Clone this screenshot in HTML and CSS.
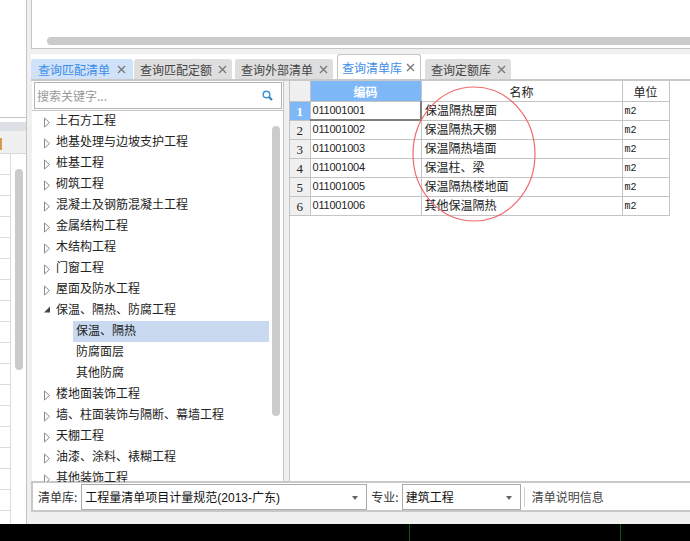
FILE: index.html
```html
<!DOCTYPE html>
<html lang="zh-CN">
<head>
    <meta charset="UTF-8">
    <title>查询清单库</title>
    <link rel="stylesheet" href="styles.css">
</head>
<body>
    <svg class="defs" width="0" height="0">
        <symbol id="closed" viewBox="0 0 6 11"><path d="M.5 1 5.5 5.500.5 10Z" fill="#fff" stroke="#8a8a8a"/></symbol>
        <symbol id="open" viewBox="0 0 6 11"><path d="M0 6.500 6 6.500 6 .5Z" fill="#444"/></symbol>
        <symbol id="close" viewBox="0 0 9 9"><path d="M1 1 8 8M8 1 1 8" fill="none" stroke="#777" stroke-width="1.300"/></symbol>
    </svg>

    <div class="desk">
        <div class="side">
            <div class="side-top"></div>
            <div class="side-band"></div>
            <div class="side-head"><span class="side-mark"></span></div>
            <div class="side-rows">
                <div class="side-row"></div>
                <div class="side-row"></div>
                <div class="side-row"></div>
                <div class="side-row"></div>
                <div class="side-row"></div>
                <div class="side-row"></div>
                <div class="side-row"></div>
                <div class="side-row"></div>
                <div class="side-row"></div>
                <div class="side-row"></div>
                <div class="side-row"></div>
                <div class="side-row"></div>
                <div class="side-row"></div>
                <div class="side-row"></div>
                <div class="side-row"></div>
                <div class="side-row"></div>
                <div class="side-row"></div>
                <div class="side-row"></div>
            </div>
            <div class="side-scroll"></div>
        </div>

        <div class="main">
            <div class="top-panel"><div class="top-scroll"></div></div>

            <div class="tabs">
                <div class="tab tab-hot">查询匹配清单<svg class="tab-x"><use href="#close"/></svg></div>
                <div class="tab">查询匹配定额<svg class="tab-x"><use href="#close"/></svg></div>
                <div class="tab">查询外部清单<svg class="tab-x"><use href="#close"/></svg></div>
                <div class="tab tab-active">查询清单库<svg class="tab-x"><use href="#close"/></svg></div>
                <div class="tab">查询定额库<svg class="tab-x"><use href="#close"/></svg></div>
            </div>

            <div class="content">
                <div class="tree-panel">
                    <div class="search">
                        <span>搜索关键字...</span>
                        <svg class="search-icon" width="11" height="11" viewBox="0 0 11 11">
                            <circle cx="4.500" cy="4.500" r="3.300" fill="none" stroke="#3d95d8" stroke-width="1.500"/>
                            <path d="M7 7 10 10" stroke="#2f7fb8" stroke-width="2"/>
                        </svg>
                    </div>
                    <div class="tree">
                        <div class="node"><svg class="arrow"><use href="#closed"/></svg>土石方工程</div>
                        <div class="node"><svg class="arrow"><use href="#closed"/></svg>地基处理与边坡支护工程</div>
                        <div class="node"><svg class="arrow"><use href="#closed"/></svg>桩基工程</div>
                        <div class="node"><svg class="arrow"><use href="#closed"/></svg>砌筑工程</div>
                        <div class="node"><svg class="arrow"><use href="#closed"/></svg>混凝土及钢筋混凝土工程</div>
                        <div class="node"><svg class="arrow"><use href="#closed"/></svg>金属结构工程</div>
                        <div class="node"><svg class="arrow"><use href="#closed"/></svg>木结构工程</div>
                        <div class="node"><svg class="arrow"><use href="#closed"/></svg>门窗工程</div>
                        <div class="node"><svg class="arrow"><use href="#closed"/></svg>屋面及防水工程</div>
                        <div class="node"><svg class="arrow"><use href="#open"/></svg>保温、隔热、防腐工程</div>
                        <div class="node child selected">保温、隔热</div>
                        <div class="node child">防腐面层</div>
                        <div class="node child">其他防腐</div>
                        <div class="node"><svg class="arrow"><use href="#closed"/></svg>楼地面装饰工程</div>
                        <div class="node"><svg class="arrow"><use href="#closed"/></svg>墙、柱面装饰与隔断、幕墙工程</div>
                        <div class="node"><svg class="arrow"><use href="#closed"/></svg>天棚工程</div>
                        <div class="node"><svg class="arrow"><use href="#closed"/></svg>油漆、涂料、裱糊工程</div>
                        <div class="node"><svg class="arrow"><use href="#closed"/></svg>其他装饰工程</div>
                        <div class="tree-scroll"></div>
                    </div>
                </div>

                <div class="grid-panel">
                    <table class="grid">
                        <tr>
                            <th class="corner"></th>
                            <th class="head-code">编码</th>
                            <th class="head-name">名称</th>
                            <th class="head-unit">单位</th>
                        </tr>
                        <tr>
                            <td class="num num-on">1</td>
                            <td class="code code-on">011001001</td>
                            <td class="name">保温隔热屋面</td>
                            <td class="unit">m2</td>
                        </tr>
                        <tr>
                            <td class="num">2</td>
                            <td class="code">011001002</td>
                            <td class="name">保温隔热天棚</td>
                            <td class="unit">m2</td>
                        </tr>
                        <tr>
                            <td class="num">3</td>
                            <td class="code">011001003</td>
                            <td class="name">保温隔热墙面</td>
                            <td class="unit">m2</td>
                        </tr>
                        <tr>
                            <td class="num">4</td>
                            <td class="code">011001004</td>
                            <td class="name">保温柱、梁</td>
                            <td class="unit">m2</td>
                        </tr>
                        <tr>
                            <td class="num">5</td>
                            <td class="code">011001005</td>
                            <td class="name">保温隔热楼地面</td>
                            <td class="unit">m2</td>
                        </tr>
                        <tr>
                            <td class="num">6</td>
                            <td class="code">011001006</td>
                            <td class="name">其他保温隔热</td>
                            <td class="unit">m2</td>
                        </tr>
                    </table>
                    <svg class="circle" width="126" height="138" viewBox="0 0 126 138">
                        <ellipse cx="63" cy="69" rx="61" ry="67" fill="none" stroke="#f06a6a" stroke-width="1.200"/>
                    </svg>
                </div>
            </div>

            <div class="footer">
                <span class="foot-label">清单库:</span>
                <div class="select select-lib">工程量清单项目计量规范(2013-广东)<i class="caret"></i></div>
                <span class="foot-label foot-major">专业:</span>
                <div class="select select-major">建筑工程<i class="caret"></i></div>
                <span class="foot-sep"></span>
                <span class="foot-info">清单说明信息</span>
            </div>
        </div>
    </div>

    <div class="taskbar">
        <span class="task-line line-a"></span>
        <span class="task-line line-b"></span>
    </div>
</body>
</html>
```

FILE: styles.css
```css
* {
    box-sizing: border-box;
}

body {
    margin: 0;
    width: 690px;
    height: 541px;
    overflow: hidden;
    background: #f0f0f0;
    color: #222;
    font-family: "Noto Sans CJK SC", "Liberation Sans", sans-serif;
    font-size: 12px;
}

.defs {
    display: block;
    height: 0;
}

.desk {
    display: flex;
    height: 524px;
}

/* left window behind the dialog */
.side {
    position: relative;
    width: 27px;
    margin-right: 4px;
    border-right: 1px solid #c4c4c4;
    background: #fff;
    overflow: hidden;
}

.side-top {
    height: 118px;
    border-bottom: 1px solid #c4c4c4;
}

.side-band {
    height: 9px;
    margin-top: 4px;
    background: #dcdfe3;
}

.side-head {
    height: 23px;
    padding-top: 7px;
    background: #f0f0f0;
    border-bottom: 1px solid #d8d8d8;
}

.side-mark {
    display: block;
    width: 2px;
    height: 12px;
    background: #d9984f;
}

.side-row {
    width: 11px;
    height: 21px;
    border-right: 1px solid #dcdcdc;
    border-bottom: 1px solid #dcdcdc;
}

.side-scroll {
    position: absolute;
    left: 15px;
    top: 169px;
    width: 8px;
    height: 201px;
    border-radius: 4px;
    background: #cbcbcb;
}

.main {
    flex: 1;
    min-width: 0;
}

.top-panel {
    height: 49px;
    padding: 37px 0 0 15px;
    background: #fff;
    border-left: 1px solid #c4c4c4;
    border-bottom: 1px solid #c4c4c4;
}

.top-scroll {
    height: 8px;
    border-radius: 4px 0 0 4px;
    background: #cbcbcb;
}

.tabs {
    display: flex;
    align-items: flex-end;
    height: 25px;
    margin-top: 5px;
    background: #fff;
}

.tab {
    display: flex;
    align-items: center;
    height: 20px;
    margin-right: 3px;
    padding-left: 6px;
    border-radius: 3px 3px 0 0;
    background: #dedede;
    color: #444;
    white-space: nowrap;
}

.tab-x {
    width: 9px;
    height: 9px;
    margin: 0 5px 0 6px;
}

.tab-hot {
    margin-right: 1px;
    padding-left: 7px;
    background: #cfe2f9;
    color: #3d8ee8;
}

.tab-hot .tab-x {
    margin: 0 7px;
}

.tab-active {
    height: 25px;
    margin-left: 1px;
    margin-right: 4px;
    padding-left: 4px;
    border: 1px solid #c4c4c4;
    border-bottom: 0;
    background: #fff;
    color: #3d8ee8;
}

.tab-active .tab-x {
    margin: 0 5px 0 4px;
}

.content {
    display: flex;
    height: 402px;
    border-top: 2px solid #c8c8c8;
}

.tree-panel {
    width: 252px;
    margin-left: 1px;
    border-right: 1px solid #c4c4c4;
    background: #fff;
}

.search {
    display: flex;
    align-items: center;
    justify-content: space-between;
    height: 27px;
    margin: 1px 1px 0 2px;
    padding: 0 8px 0 2px;
    border: 1px solid #b4b4b4;
    color: #999;
}

.search-icon {
    flex: none;
}

.tree {
    position: relative;
    height: 372px;
    overflow: hidden;
    margin-top: 1px;
    border-top: 1px solid #c4c4c4;
}

.node {
    display: flex;
    align-items: center;
    height: 21px;
    padding-left: 24px;
    padding-bottom: 4px;
    white-space: nowrap;
}

.arrow {
    flex: none;
    width: 6px;
    height: 11px;
    margin: 5px 6px 0 -12px;
}

.child {
    margin: 0 14px 0 41px;
    padding-left: 3px;
}

.selected {
    background: #c8d9f0;
}

.tree-scroll {
    position: absolute;
    left: 240px;
    top: 15px;
    width: 8px;
    height: 290px;
    border-radius: 4px;
    background: #cbcbcb;
}

.grid-panel {
    position: relative;
    flex: 1;
    margin-left: 5px;
    border-left: 1px solid #c4c4c4;
    background: #fff;
}

.grid {
    border-collapse: collapse;
    table-layout: fixed;
    width: 379px;
}

.grid th,
.grid td {
    height: 19px;
    padding: 0 2px 2px;
    border: 1px solid #c4c4c4;
    font-weight: normal;
    white-space: nowrap;
    line-height: 16px;
}

.grid th {
    height: 20px;
    padding: 2px 2px 0;
    border-top: 0;
    text-align: center;
}

.corner {
    width: 20px;
    background: #f0f0f0;
    border-left: 0 !important;
}

.head-code {
    width: 111px;
    background: #7eb8f8;
    color: #fff;
    font-weight: bold !important;
}

.head-name {
    width: 201px;
}

.head-unit {
    width: 47px;
}

.grid .num {
    padding: 2px 0 0;
    border-left: 0;
    background: #f0f0f0;
    text-align: center;
    font-family: "Liberation Serif", serif;
    font-size: 13px;
}

.grid .num-on {
    background: #7eb8f8;
    color: #fff;
    font-weight: bold;
}

.grid .code {
    padding-bottom: 1px;
    font-family: "Liberation Sans", sans-serif;
    font-size: 11px;
    letter-spacing: -0.2px;
}

.grid .code-on {
    border-right: 2px solid #808080;
    border-bottom: 2px solid #808080;
}

.grid .name {
    padding-left: 3px;
}

.grid .unit {
    padding: 2px 2px 0;
    font-family: "Liberation Mono", monospace;
    font-size: 10px;
}

/* hand drawn annotation on top of the table */
.circle {
    position: absolute;
    left: 121px;
    top: 4px;
    pointer-events: none;
}

.footer {
    display: flex;
    align-items: center;
    height: 31px;
    border-top: 2px solid #c8c8c8;
    border-bottom: 2px solid #c8c8c8;
    border-left: 2px solid #c8c8c8;
    background: #fff;
}

.foot-label {
    margin-left: 5px;
    color: #333;
}

.foot-major {
    margin-left: 4px;
}

.select {
    position: relative;
    display: flex;
    align-items: center;
    height: 26px;
    margin-left: 3px;
    padding-left: 3px;
    border: 1px solid #aaa;
    color: #111;
    font-family: "Liberation Sans", "Noto Sans CJK SC", sans-serif;
}

.select-lib {
    width: 286px;
    margin-left: 4px;
}

.select-major {
    width: 119px;
}

.caret {
    position: absolute;
    right: 8px;
    top: 11px;
    border-top: 4px solid #666;
    border-left: 3px solid transparent;
    border-right: 3px solid transparent;
}

.foot-sep {
    width: 1px;
    height: 20px;
    margin: 0 7px 0 3px;
    background: #d0d0d0;
}

.foot-info {
    color: #444;
}

.taskbar {
    position: relative;
    height: 17px;
    background: #000;
}

.task-line {
    position: absolute;
    top: 0;
    bottom: 0;
    width: 1px;
    background: #0c5a0c;
}

.line-a {
    left: 409px;
}

.line-b {
    left: 620px;
}
```
